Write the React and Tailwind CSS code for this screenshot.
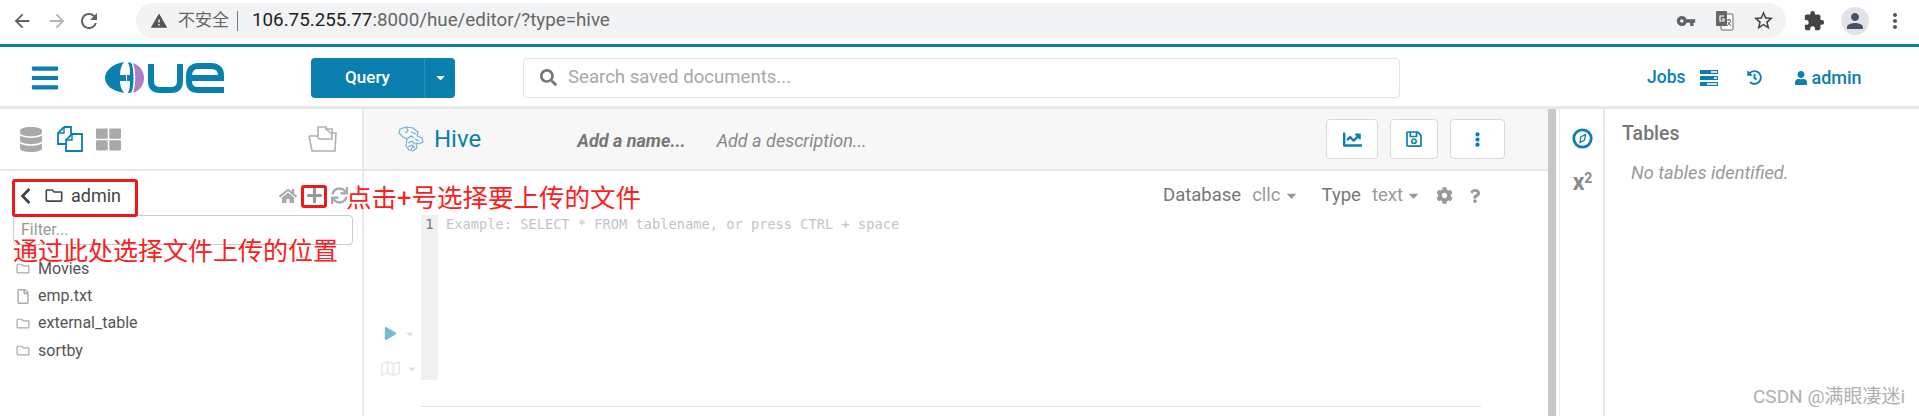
import { FaDatabase, FaThLarge, FaChevronLeft, FaRegFolder, FaRegFile, FaHome, FaPlus, FaSync, FaCog, FaQuestion, FaCaretDown, FaChartLine, FaRegSave, FaEllipsisV, FaUser, FaHistory, FaSearch, FaPlay, FaRegMap, FaBars } from "react-icons/fa";
import { MdArrowBack, MdArrowForward, MdRefresh, MdWarning, MdVpnKey, MdStarBorder, MdExtension, MdPerson, MdMoreVert } from "react-icons/md";

const files = [
  { name: "emp.txt", file: true },
  { name: "external_table" },
  { name: "sortby" },
];

function HueLogo() {
  return (
    <svg width="120" height="32" viewBox="0 0 120 32" className="ml-[45px]">
      <path d="M19 0C7 2 0 9 0 16C0 23 7 29 19 31C16 27 15 23 15 19H21V13H15C15 8 16 4 19 0Z" fill="#0b7fad" />
      <path d="M23 1C25 0 26 1 27 2C29 11 29 21 27 29C26 31 25 31 23 31C25 27 25 23 25 19H22V13H25C25 8 25 4 23 1Z" fill="#0b7fad" />
      <path d="M28 1C36 4 39 10 39 16C39 22 36 28 28 31C31 24 31 8 28 1Z" fill="#a87fc9" />
      <path d="M46 2V19C46 25 49 28 55 28H66C72 28 75 25 75 19V2" fill="none" stroke="#0b7fad" strokeWidth="6" />
      <path d="M84 16H116V13C116 7 112 4 106 4H93C87 4 84 8 84 14V19C84 25 87 28 93 28H119" fill="none" stroke="#0b7fad" strokeWidth="6" />
    </svg>
  );
}

function HiveIcon() {
  return (
    <svg width="26" height="26" viewBox="0 0 26 26" fill="none" stroke="#6db3d3" strokeWidth="1.1">
      <path d="M2 3L8 1L15 2L20 6L19 10L24 12L25 16L21 18L18 17L19 22L15 25L11 24L8 20L9 13L5 11L1 7Z" />
      <path d="M8 1L10 5L7 7M13 6L18 8M9 13L13 10L16 12M10 17L14 15L17 18M10 21L14 19L17 22" />
      <path d="M13 24L15 20M17 13L21 15" />
    </svg>
  );
}

function DocsIcon() {
  return (
    <svg width="26" height="26" viewBox="0 0 26 26" fill="none" stroke="#0b7fad" strokeWidth="1.8">
      <path d="M7 1H14V8M7 1L1 7V18H9" />
      <path d="M7 1V7H1" strokeWidth="1.4" />
      <path d="M15 8H25V25H9V14Z" />
      <path d="M15 8V14H9" strokeWidth="1.4" />
    </svg>
  );
}

function OpenFolderIcon() {
  return (
    <svg width="29" height="26" viewBox="0 0 29 26" fill="none" stroke="#b0b0b0" strokeWidth="1.6">
      <path d="M1 10L4 25H27L28 7H24" />
      <path d="M1 10H9L11 13H24V3H18V1H10V10" />
      <path d="M18 3L24 8" />
    </svg>
  );
}

function CompassIcon() {
  return (
    <svg width="21" height="21" viewBox="0 0 21 21" fill="none">
      <circle cx="10.5" cy="10.5" r="8.7" stroke="#0b7fad" strokeWidth="2.8" />
      <path d="M13.5 6.5L12.5 12L8 14.5L8.8 9Z" stroke="#0b7fad" strokeWidth="1.3" />
    </svg>
  );
}

function JobsIcon() {
  return (
    <svg width="18" height="16" viewBox="0 0 18 16">
      <rect y="0" width="18" height="4" fill="#0b7fad" />
      <rect x="11" y="1" width="6" height="2" fill="#cfe5ee" />
      <rect y="6" width="18" height="4" fill="#0b7fad" />
      <rect x="14" y="7" width="3" height="2" fill="#cfe5ee" />
      <rect y="12" width="18" height="4" fill="#0b7fad" />
      <rect x="7" y="13" width="10" height="2" fill="#cfe5ee" />
    </svg>
  );
}

function TranslateIcon() {
  return (
    <svg width="18" height="20" viewBox="0 0 18 20">
      <rect x="5" y="3" width="12" height="16" rx="1" fill="#fff" stroke="#666" />
      <rect x="0" y="0" width="11" height="15" rx="1" fill="#666" />
      <path d="M8 5H4V10H8V8H6" fill="none" stroke="#fff" strokeWidth="1.2" />
      <path d="M11 9H15M13 8V10M15 10L11 15M12 11L15 15" fill="none" stroke="#666" />
    </svg>
  );
}

function ActionButton({ width, children }) {
  return (
    <button className={`${width} flex h-[40px] items-center justify-center rounded border border-[#d9d9d9] bg-white text-[#0b7fad]`}>
      {children}
    </button>
  );
}

export default function App() {
  return (
    <div className="relative flex h-[416px] w-[1919px] flex-col overflow-hidden bg-white font-['Roboto','Noto_Sans_CJK_SC',sans-serif] text-[#444]">
      {/* browser toolbar */}
      <div className="flex h-[44px] items-center bg-white pb-[3px] text-[#5f6368]">
        <MdArrowBack className="ml-[11px] text-[22px]" />
        <MdArrowForward className="ml-[13px] text-[22px] text-[#b5b5b5]" />
        <MdRefresh className="ml-[9px] text-[24px]" />
        <div className="ml-[35px] flex h-[35px] w-[1650px] items-center rounded-full bg-[#f1f3f4] text-[17px]">
          <MdWarning className="ml-[14px] text-[18px] text-[#555]" />
          <span className="ml-[10px] text-[#666]">不安全</span>
          <span className="ml-[8px] h-[20px] w-px bg-[#777]" />
          <span className="ml-[14px] text-[18.8px] text-[#222]">106.75.255.77<span className="text-[#666]">:8000/hue/editor/?type=hive</span></span>
          <MdVpnKey className="ml-auto text-[20px] text-[#5f6368]" />
          <span className="ml-[20px]"><TranslateIcon /></span>
          <MdStarBorder className="ml-[18px] mr-[11px] text-[23px] text-[#444]" />
        </div>
        <MdExtension className="ml-[17px] text-[22px] text-[#444]" />
        <div className="ml-[16px] flex h-[28px] w-[28px] items-center justify-center rounded-full bg-[#e0e3e7]">
          <MdPerson className="text-[24px] text-[#4a5260]" />
        </div>
        <MdMoreVert className="ml-[14px] text-[24px] text-[#555]" />
      </div>

      {/* hue navbar */}
      <div className="flex h-[65px] shrink-0 items-center border-y-[3px] border-t-[#0b7fad] border-b-[#e8e8e8] bg-white pt-[2px] text-[#0b7fad]">
        <FaBars className="ml-[30px] h-[30px] w-[30px]" />
        <HueLogo />
        <div className="ml-[86px] flex h-[40px] w-[144px] items-center rounded bg-[#0b7fad] text-white">
          <span className="w-[113px] text-center text-[17px] font-medium">Query</span>
          <span className="flex h-full flex-1 items-center justify-center border-l border-[#2a8fb8]"><FaCaretDown className="text-[13px]" /></span>
        </div>
        <div className="ml-[68px] flex h-[40px] w-[877px] items-center rounded border border-[#e3e3e3] bg-white">
          <FaSearch className="ml-[16px] text-[17px] text-[#777]" />
          <span className="ml-[11px] text-[18.6px] text-[#a8a8a8]">Search saved documents...</span>
        </div>
        <span className="ml-[247px] text-[17.5px] font-medium">Jobs</span>
        <span className="ml-[14px]"><JobsIcon /></span>
        <FaHistory className="ml-[29px] text-[15px]" />
        <FaUser className="ml-[32px] text-[14px]" />
        <span className="ml-[4px] text-[18px] font-medium">admin</span>
      </div>

      <div className="flex min-h-0 flex-1">
        {/* left assist */}
        <div className="w-[364px] shrink-0 border-r-2 border-[#e8e8e8]">
          <div className="flex h-[62px] items-center border-b-2 border-[#e8e8e8] pl-[20px] pr-[25px]">
            <FaDatabase className="h-[25px] w-[22px] text-[#a9a9a9]" />
            <span className="ml-[15px]"><DocsIcon /></span>
            <FaThLarge className="ml-[13px] h-[25px] w-[25px] text-[#a9a9a9]" />
            <span className="ml-auto"><OpenFolderIcon /></span>
          </div>
          <div className="flex h-[44px] items-center pl-[19px] pt-[5px] text-[#444]">
            <FaChevronLeft className="h-[18px] w-[13px]" />
            <FaRegFolder className="ml-[13px] h-[17px] w-[18px]" />
            <span className="ml-[8px] text-[18px]">admin</span>
            <FaHome className="ml-[158px] text-[18px] text-[#a9a9a9]" />
            <FaPlus className="ml-[9px] text-[17px] text-[#999]" />
            <FaSync className="ml-[8px] text-[17px] text-[#a9a9a9]" />
          </div>
          <div className="ml-[13px] flex h-[30px] w-[340px] items-center rounded border border-[#ccc] pl-[7px] text-[16px] text-[#999]">Filter...</div>
          <div className="ml-[16px] mt-[10px] text-[16px] text-[#555]">
            <div className="flex h-[27.4px] items-center">
              <FaRegFolder className="h-[13px] w-[14px] text-[#aaa]" />
              <span className="ml-[8px]">Movies</span>
            </div>
            {files.map((f) => (
              <div key={f.name} className="flex h-[27.4px] items-center">
                {f.file ? <FaRegFile className="h-[15px] w-[14px] text-[#aaa]" /> : <FaRegFolder className="h-[13px] w-[14px] text-[#aaa]" />}
                <span className="ml-[8px]">{f.name}</span>
              </div>
            ))}
          </div>
        </div>

        {/* editor */}
        <div className="w-[1184px] shrink-0">
          <div className="flex h-[62px] items-center border-b-2 border-[#e8e8e8] bg-[#f7f7f7]">
            <span className="ml-[34px]"><HiveIcon /></span>
            <span className="ml-[10px] text-[24px] leading-none text-[#0b7fad]">Hive</span>
            <span className="ml-[96px] pt-[3px] text-[18px] font-bold italic text-[#777]">Add a name...</span>
            <span className="ml-[31px] pt-[3px] text-[18px] italic text-[#888]">Add a description...</span>
            <div className="ml-auto mr-[43px] flex gap-[12px]">
              <ActionButton width="w-[52px]"><FaChartLine className="text-[19px]" /></ActionButton>
              <ActionButton width="w-[48px]"><FaRegSave className="text-[18px]" /></ActionButton>
              <ActionButton width="w-[55px]"><FaEllipsisV className="text-[15px]" /></ActionButton>
            </div>
          </div>
          <div className="flex h-[44px] items-center justify-end pr-[66px] pt-[5px] text-[18.5px] text-[#777]">
            <span>Database</span>
            <span className="ml-[11px] text-[#999]">cllc</span>
            <FaCaretDown className="ml-[3px] text-[15px] text-[#999]" />
            <span className="ml-[23px]">Type</span>
            <span className="ml-[11px] text-[#999]">text</span>
            <FaCaretDown className="ml-[3px] text-[15px] text-[#999]" />
            <FaCog className="ml-[15px] text-[17px] text-[#999]" />
            <FaQuestion className="ml-[15px] text-[14px] text-[#999]" />
          </div>
          <div className="flex h-[165px]">
            <div className="w-[57px] shrink-0 pl-[20px] pt-[112px]">
              <div className="flex items-center">
                <FaPlay className="text-[13px] text-[#7ab8d4]" />
                <FaCaretDown className="ml-[7px] text-[12px] text-[#e2e2e2]" />
              </div>
              <div className="mt-[19px] flex items-center">
                <FaRegMap className="-ml-[3px] text-[19px] text-[#e8e8e8]" />
                <FaCaretDown className="ml-[6px] text-[12px] text-[#e2e2e2]" />
              </div>
            </div>
            <div className="w-[17px] shrink-0 bg-[#f0f0f0] text-center font-['DejaVu_Sans_Mono',monospace] text-[14px] leading-[18px] text-[#777]">1</div>
            <div className="pl-[8px] font-['DejaVu_Sans_Mono',monospace] text-[13.7px] leading-[18px] text-[#c4c4c4]">Example: SELECT * FROM tablename, or press CTRL + space</div>
          </div>
          <div className="ml-[57px] mt-[26px] h-px w-[1060px] bg-[#e0e0e0]" />
        </div>

        {/* scroll handle */}
        <div className="w-[8px] shrink-0 bg-[#c8c8c8]" />
        <div className="ml-[3px] w-px shrink-0 bg-[#e8e8e8]" />

        {/* right assist */}
        <div className="flex w-[45px] shrink-0 flex-col items-center border-r-2 border-[#e8e8e8] pl-[2px] pt-[19px] text-[#0b7fad]">
          <CompassIcon />
          <span className="mt-[22px] text-[23px] font-bold leading-none text-[#8a8a8a]">x<sup className="text-[14px]">2</sup></span>
        </div>
        <div className="flex-1 pl-[17px] pt-[10px]">
          <div className="text-[19.5px] font-medium text-[#777]">Tables</div>
          <div className="ml-[9px] mt-[11px] text-[18.3px] italic text-[#999]">No tables identified.</div>
        </div>
      </div>

      {/* red annotations drawn over the screenshot */}
      <div className="absolute left-[12px] top-[179px] h-[38px] w-[126px] rounded-[3px] border-[3px] border-[#f01818]" />
      <div className="absolute left-[301px] top-[185px] h-[23px] w-[26px] rounded-[3px] border-[3px] border-[#f01818]" />
      <div className="absolute left-[346px] top-[182px] text-[25.5px] leading-[32px] text-[#fb2020]">点击+号选择要上传的文件</div>
      <div className="absolute left-[13px] top-[236px] text-[25px] leading-[32px] text-[#fb2020]">通过此处选择文件上传的位置</div>
      <div className="absolute left-[1753px] top-[387px] text-[19px] leading-[20px] text-[#b0b0b0]">CSDN @满眼凄迷i</div>
    </div>
  );
}
